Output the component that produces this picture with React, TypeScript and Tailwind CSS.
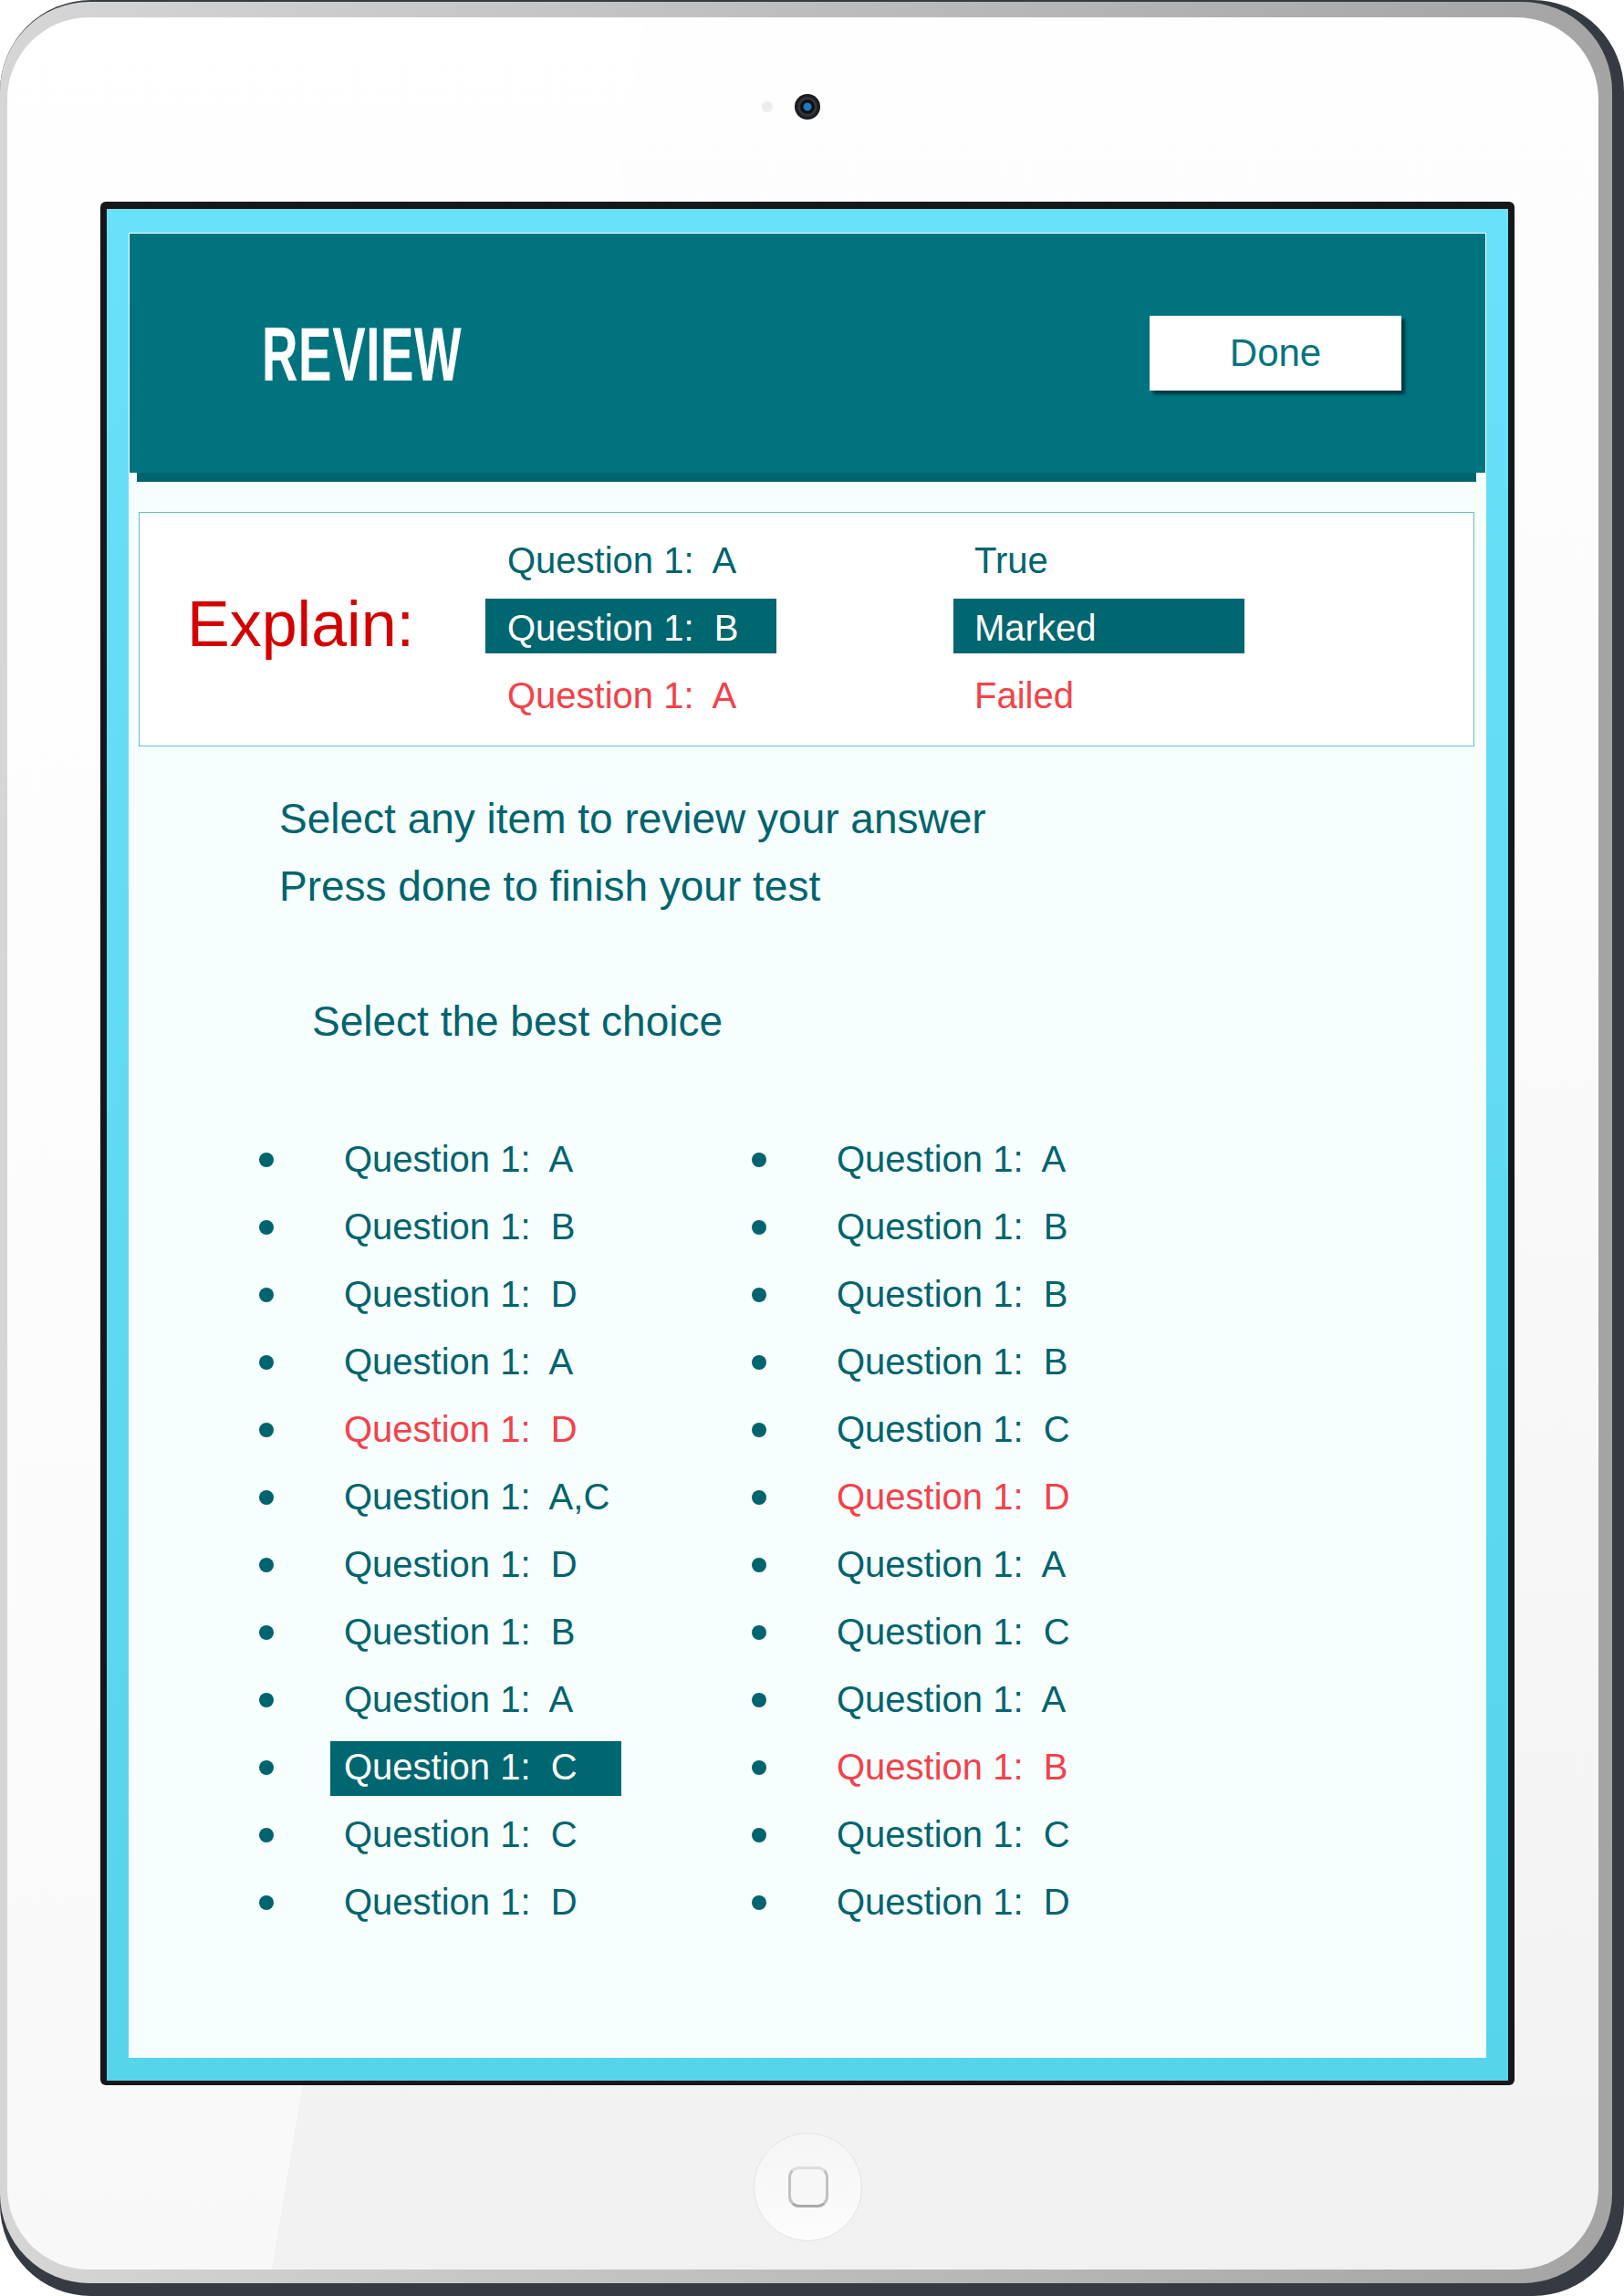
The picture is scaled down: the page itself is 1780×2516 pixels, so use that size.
import React from "react";

type Kind = "n" | "red" | "hl";

const leftCol: [string, Kind][] = [
  ["A", "n"],
  ["B", "n"],
  ["D", "n"],
  ["A", "n"],
  ["D", "red"],
  ["A,C", "n"],
  ["D", "n"],
  ["B", "n"],
  ["A", "n"],
  ["C", "hl"],
  ["C", "n"],
  ["D", "n"],
];

const rightCol: [string, Kind][] = [
  ["A", "n"],
  ["B", "n"],
  ["B", "n"],
  ["B", "n"],
  ["C", "n"],
  ["D", "red"],
  ["A", "n"],
  ["C", "n"],
  ["A", "n"],
  ["B", "red"],
  ["C", "n"],
  ["D", "n"],
];

function Item({ ans, kind }: { ans: string; kind: Kind }) {
  const tone =
    kind === "hl"
      ? "bg-[#00666f] text-white"
      : kind === "red"
      ? "text-[#f4414a]"
      : "text-[#00646e]";
  return (
    <div className="flex h-[74px] items-start">
      <div className="mt-[30px] h-4 w-4 shrink-0 rounded-full bg-[#00646e]" />
      <div
        className={
          "ml-[62px] mt-[9px] h-[60px] w-[319px] whitespace-pre pl-[15px] text-[40px] leading-[56px] " +
          tone
        }
      >
        {"Question 1:  " + ans}
      </div>
    </div>
  );
}

export default function App() {
  return (
    <div className="h-[2516px] w-[1780px] overflow-hidden bg-white font-['Liberation_Sans',Arial,sans-serif]">
      {/* dark outer shell */}
      <div className="h-full rounded-[100px] bg-[#363a42] pb-[14px] pr-[13px] pt-[2px]">
        {/* silver bezel */}
        <div className="h-full rounded-[98px] bg-[linear-gradient(to_right,#d6d6d6,#bdbdbd_50%,#a4a4a4)] pb-[15px] pl-[8px] pr-[15px] pt-[17px]">
          {/* face */}
          <div className="relative h-full overflow-hidden rounded-[90px] bg-[linear-gradient(to_bottom,#fefefe,#fbfbfb_40%,#f1f1f1)]">
            <div className="absolute inset-0 bg-white/50 [clip-path:polygon(0_0,700px_0,290px_100%,0_100%)]" />
            <div className="relative">
              {/* camera row */}
              <div className="flex items-center pl-[827px] pt-[84px]">
                <div className="h-[12px] w-[12px] rounded-full bg-[#ececec]" />
                <div className="ml-[24px] h-[28px] w-[28px] rounded-full bg-[radial-gradient(circle,#1a7bc0_0_4px,#0d0e11_5px_7px,#3b3d44_9px,#222327_11px,#141518_14px)]" />
              </div>

              {/* screen black border */}
              <div className="ml-[102px] mt-[90px] h-[2064px] w-[1550px] rounded-[6px] bg-[#17171b] pb-[5px] pl-[7px] pr-[7px] pt-[8px]">
                {/* cyan frame */}
                <div className="h-full bg-[linear-gradient(to_bottom,#69e1f8,#56d4ea)] pb-[25px] pl-[24px] pr-[24px] pt-[26px]">
                  {/* content */}
                  <div className="h-[2000px] w-[1488px] bg-[#f7fefe]">
                    {/* header */}
                    <div className="flex h-[263px] items-start justify-between border-x border-t border-white bg-[#01737f] pl-[145px] pr-[92px] pt-[90px]">
                      <div className="origin-left scale-x-[0.65] text-[84px] font-bold leading-[84px] tracking-[1px] text-white">
                        REVIEW
                      </div>
                      <div className="h-[82px] w-[276px] bg-white text-center text-[42px] leading-[82px] text-[#037480] shadow-[4px_4px_3px_rgba(0,45,52,0.85)]">
                        Done
                      </div>
                    </div>
                    <div className="ml-[9px] mr-[11px] h-[10px] bg-[#016570]" />

                    {/* explain box */}
                    <div className="ml-[11px] mr-[13px] mt-[33px] flex h-[257px] border border-[#63c0cc] bg-white pt-[15px]">
                      <div className="w-[379px] pl-[52px] pt-[74px] text-[70px] leading-[66px] text-[#d40000]">
                        Explain:
                      </div>
                      <div className="w-[513px] text-[40px]">
                        <div className="h-[74px] whitespace-pre pl-[24px] leading-[74px] text-[#00646e]">
                          {"Question 1:  A"}
                        </div>
                        <div className="h-[74px] pt-[5px]">
                          <div className="h-[60px] w-[319px] whitespace-pre bg-[#00666f] pl-[24px] leading-[64px] text-white">
                            {"Question 1:  B"}
                          </div>
                        </div>
                        <div className="h-[74px] whitespace-pre pl-[24px] leading-[74px] text-[#f4414a]">
                          {"Question 1:  A"}
                        </div>
                      </div>
                      <div className="text-[40px]">
                        <div className="h-[74px] pl-[23px] leading-[74px] text-[#00646e]">
                          True
                        </div>
                        <div className="h-[74px] pt-[5px]">
                          <div className="h-[60px] w-[319px] bg-[#00666f] pl-[23px] leading-[64px] text-white">
                            Marked
                          </div>
                        </div>
                        <div className="h-[74px] pl-[23px] leading-[74px] text-[#f4414a]">
                          Failed
                        </div>
                      </div>
                    </div>

                    {/* instructions */}
                    <div className="mt-[42px] pl-[165px] text-[46px] leading-[74px] text-[#00646e]">
                      <div>Select any item to review your answer</div>
                      <div>Press done to finish your test</div>
                    </div>
                    <div className="mt-[74px] pl-[201px] text-[46px] leading-[74px] text-[#00646e]">
                      Select the best choice
                    </div>

                    {/* list */}
                    <div className="mt-[77px] grid grid-cols-[540px_540px] pl-[143px]">
                      <div>
                        {leftCol.map(([a, k], i) => (
                          <Item key={i} ans={a} kind={k} />
                        ))}
                      </div>
                      <div>
                        {rightCol.map(([a, k], i) => (
                          <Item key={i} ans={a} kind={k} />
                        ))}
                      </div>
                    </div>
                  </div>
                </div>
              </div>

              {/* home button */}
              <div className="ml-[818px] mt-[52px] flex h-[119px] w-[119px] items-center justify-center rounded-full border border-[#e4e4e4] bg-[linear-gradient(to_bottom,#f5f5f5,#fcfcfc)]">
                <div className="h-[45px] w-[44px] rounded-[12px] border-[3px] border-b-[#a9a9a9] border-l-[#c2c2c2] border-r-[#c2c2c2] border-t-[#dedede] bg-[#f7f7f7]" />
              </div>
            </div>
          </div>
        </div>
      </div>
    </div>
  );
}
